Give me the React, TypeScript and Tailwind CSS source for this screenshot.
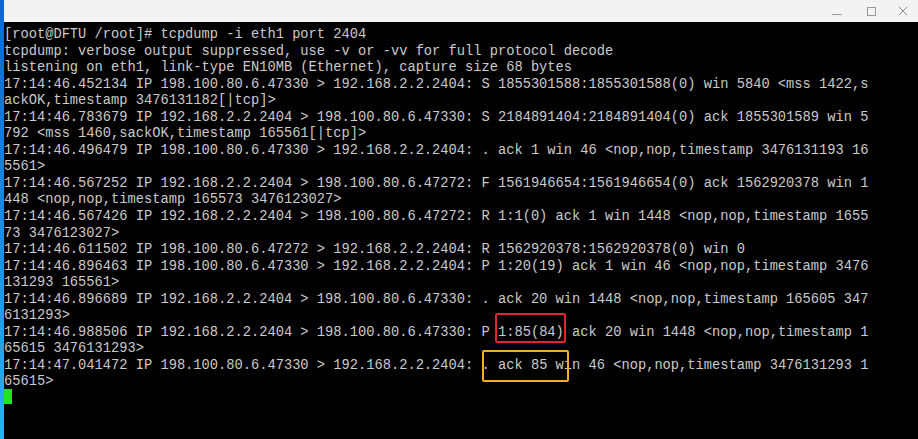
import React from "react";

const lines: React.ReactNode[] = [
  "[root@DFTU /root]# tcpdump -i eth1 port 2404",
  "tcpdump: verbose output suppressed, use -v or -vv for full protocol decode",
  "listening on eth1, link-type EN10MB (Ethernet), capture size 68 bytes",
  "17:14:46.452134 IP 198.100.80.6.47330 > 192.168.2.2.2404: S 1855301588:1855301588(0) win 5840 <mss 1422,s",
  "ackOK,timestamp 3476131182[|tcp]>",
  "17:14:46.783679 IP 192.168.2.2.2404 > 198.100.80.6.47330: S 2184891404:2184891404(0) ack 1855301589 win 5",
  "792 <mss 1460,sackOK,timestamp 165561[|tcp]>",
  "17:14:46.496479 IP 198.100.80.6.47330 > 192.168.2.2.2404: . ack 1 win 46 <nop,nop,timestamp 3476131193 16",
  "5561>",
  "17:14:46.567252 IP 192.168.2.2.2404 > 198.100.80.6.47272: F 1561946654:1561946654(0) ack 1562920378 win 1",
  "448 <nop,nop,timestamp 165573 3476123027>",
  "17:14:46.567426 IP 192.168.2.2.2404 > 198.100.80.6.47272: R 1:1(0) ack 1 win 1448 <nop,nop,timestamp 1655",
  "73 3476123027>",
  "17:14:46.611502 IP 198.100.80.6.47272 > 192.168.2.2.2404: R 1562920378:1562920378(0) win 0",
  "17:14:46.896463 IP 198.100.80.6.47330 > 192.168.2.2.2404: P 1:20(19) ack 1 win 46 <nop,nop,timestamp 3476",
  "131293 165561>",
  "17:14:46.896689 IP 192.168.2.2.2404 > 198.100.80.6.47330: . ack 20 win 1448 <nop,nop,timestamp 165605 347",
  "6131293>",
  <>
    {"17:14:46.988506 IP 192.168.2.2.2404 > 198.100.80.6.47330: P "}
    <span className="relative">
      1:85(84)
      <span className="absolute left-[-3px] right-[-2px] top-[-12px] bottom-[-3px] rounded-[2px] border-2 border-[#e5232b]" />
    </span>
    {" ack 20 win 1448 <nop,nop,timestamp 1"}
  </>,
  "65615 3476131293>",
  <>
    {"17:14:47.041472 IP 198.100.80.6.47330 > 192.168.2.2.2404: "}
    <span className="relative">
      . ack 85 w
      <span className="absolute left-0 right-[-5px] top-[-8px] bottom-[-9px] rounded-[2px] border-2 border-[#f2b01e]" />
    </span>
    {"in 46 <nop,nop,timestamp 3476131293 1"}
  </>,
  "65615>",
];

export default function App() {
  return (
    <div className="flex h-[439px] w-[918px] overflow-hidden bg-black">
      <div className="w-[4px] shrink-0 bg-gradient-to-b from-[#0c66d4] to-[#2bb2f4]" />
      <div className="flex flex-1 flex-col">
        <div className="relative flex h-[22px] shrink-0 items-center justify-end bg-[#f3f3f3]">
          <div className="flex items-center">
            <div className="flex w-[34px] justify-center">
              <div className="mt-[6px] h-[1px] w-[10px] bg-[#9a9a9a]" />
            </div>
            <div className="flex w-[34px] justify-center">
              <div className="h-[9px] w-[9px] border border-[#9a9a9a]" />
            </div>
            <div className="flex w-[30px] justify-center">
              <svg width="10" height="10" viewBox="0 0 10 10">
                <path d="M1 1L9 9M9 1L1 9" stroke="#8a8a8a" strokeWidth="1" />
              </svg>
            </div>
          </div>
        </div>
        <div
          className="flex-1 bg-black pt-[5px] text-[13.72px] leading-[16.55px] text-[#cbcbcb] whitespace-pre"
          style={{ fontFamily: '"Liberation Mono", "DejaVu Sans Mono", monospace' }}
        >
          {lines.map((l, i) => (
            <div key={i} className="h-[16.55px]">
              {l}
            </div>
          ))}
          <div className="flex h-[16.55px] items-start">
            <div className="mt-[-2px] h-[15px] w-[8px] bg-[#1ee61e]" />
          </div>
        </div>
      </div>
    </div>
  );
}
